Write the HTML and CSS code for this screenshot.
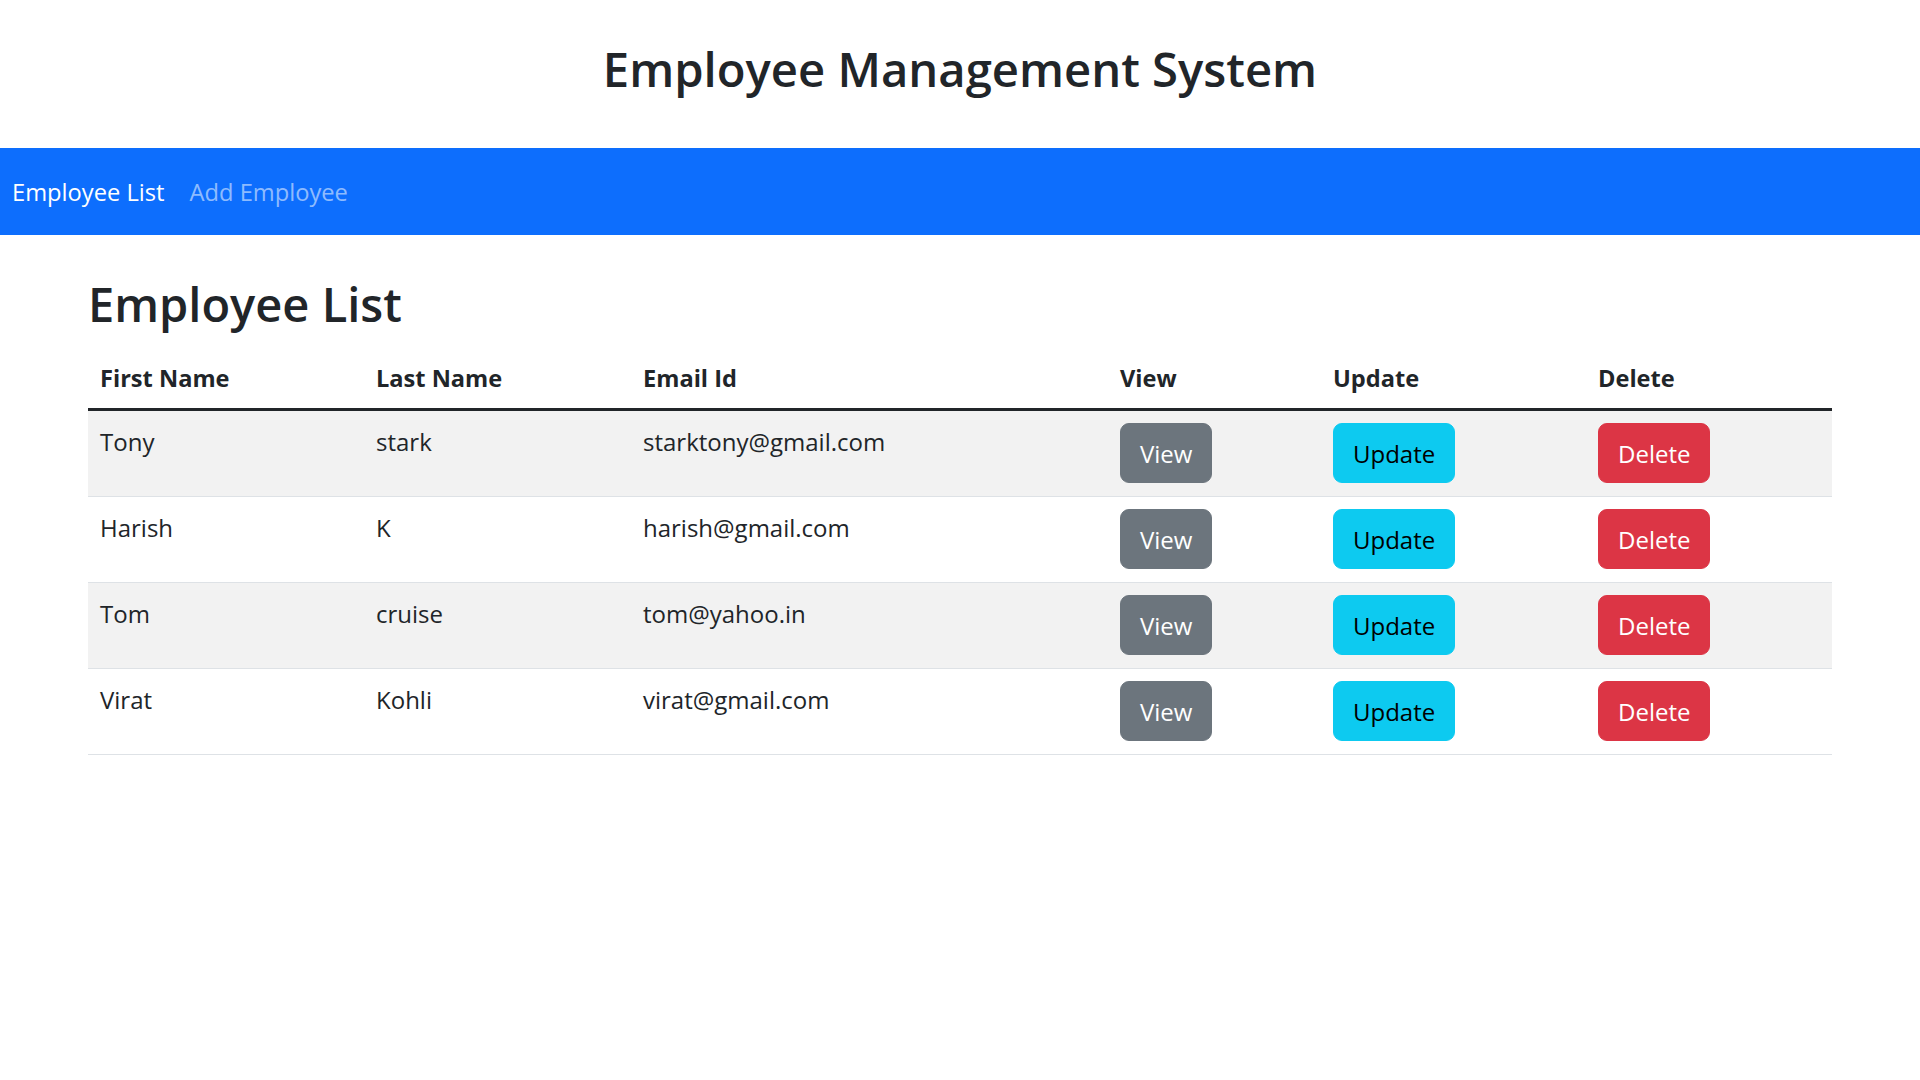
FILE: index.html
```html
<!DOCTYPE html>
<html lang="en">
<head>
<meta charset="utf-8">
<title>Employee Management System</title>
<link rel="stylesheet" href="styles.css">
</head>
<body>
<header class="site-header">
  <h1 class="site-title">Employee Management System</h1>
</header>
<nav class="navbar">
  <a class="nav-link active" href="#">Employee List</a>
  <a class="nav-link" href="#">Add Employee</a>
</nav>
<main class="container">
  <h2 class="page-heading">Employee List</h2>
  <table class="table">
    <colgroup>
      <col class="c-first"><col class="c-last"><col class="c-email"><col class="c-view"><col class="c-update"><col class="c-delete">
    </colgroup>
    <thead>
      <tr><th>First Name</th><th>Last Name</th><th>Email Id</th><th>View</th><th>Update</th><th>Delete</th></tr>
    </thead>
    <tbody>
      <tr><td>Tony</td><td>stark</td><td>starktony@gmail.com</td><td><button class="btn btn-secondary">View</button></td><td><button class="btn btn-info">Update</button></td><td><button class="btn btn-danger">Delete</button></td></tr>
      <tr><td>Harish</td><td>K</td><td>harish@gmail.com</td><td><button class="btn btn-secondary">View</button></td><td><button class="btn btn-info">Update</button></td><td><button class="btn btn-danger">Delete</button></td></tr>
      <tr><td>Tom</td><td>cruise</td><td>tom@yahoo.in</td><td><button class="btn btn-secondary">View</button></td><td><button class="btn btn-info">Update</button></td><td><button class="btn btn-danger">Delete</button></td></tr>
      <tr><td>Virat</td><td>Kohli</td><td>virat@gmail.com</td><td><button class="btn btn-secondary">View</button></td><td><button class="btn btn-info">Update</button></td><td><button class="btn btn-danger">Delete</button></td></tr>
    </tbody>
  </table>
</main>
</body>
</html>
```
FILE: styles.css
```css
* { box-sizing: border-box; }
html, body { margin: 0; padding: 0; }
body {
  font-family: "Open Sans", "Noto Sans", sans-serif;
  font-size: 24px;
  line-height: 1.5;
  color: #212529;
  background: #fff;
}
.site-header {
  padding: 41px 0 0;
  height: 148px;
  text-align: center;
}
.site-title {
  margin: 0;
  font-size: 47.2px;
  font-weight: 600;
  line-height: 1.2;
}
.navbar {
  display: flex;
  align-items: center;
  gap: 25px;
  height: 87px;
  padding: 0 12px;
  background: #0d6efd;
}
.nav-link {
  color: rgba(255, 255, 255, 0.55);
  text-decoration: none;
  font-size: 23.7px;
  line-height: 36px;
}
.nav-link.active { color: #fff; }
.container {
  padding: 41px 88px 0;
}
.page-heading {
  margin: 0 0 15px;
  font-size: 47px;
  font-weight: 600;
  line-height: 1.22;
}
.table {
  width: 100%;
  border-collapse: collapse;
  table-layout: fixed;
}
.c-first { width: 276px; }
.c-last { width: 267px; }
.c-email { width: 477px; }
.c-view { width: 213px; }
.c-update { width: 265px; }
.c-delete { width: 246px; }
.table th {
  text-align: left;
  font-weight: 700;
  font-size: 23.6px;
  padding: 12px 12px 12px;
  line-height: 36px;
  border-bottom: 3px solid #212529;
}
.table td {
  vertical-align: top;
  padding: 13px 12px 13px;
  line-height: 36px;
  border-bottom: 1px solid #dee2e6;
}
.table tbody tr:nth-child(odd) td { background: #f2f2f2; }
.btn {
  display: inline-block;
  font-family: inherit;
  font-size: 24px;
  line-height: 36px;
  padding: 12px 19px 10px;
  border: 1px solid transparent;
  border-radius: 9px;
  height: 60px;
  cursor: pointer;
}
.table td .btn { margin-top: -1px; }
.btn-secondary { background: #6c757d; border-color: #6c757d; color: #fff; }
.btn-info { background: #0dcaf0; border-color: #0dcaf0; color: #000; }
.btn-danger { background: #dc3545; border-color: #dc3545; color: #fff; }
```
